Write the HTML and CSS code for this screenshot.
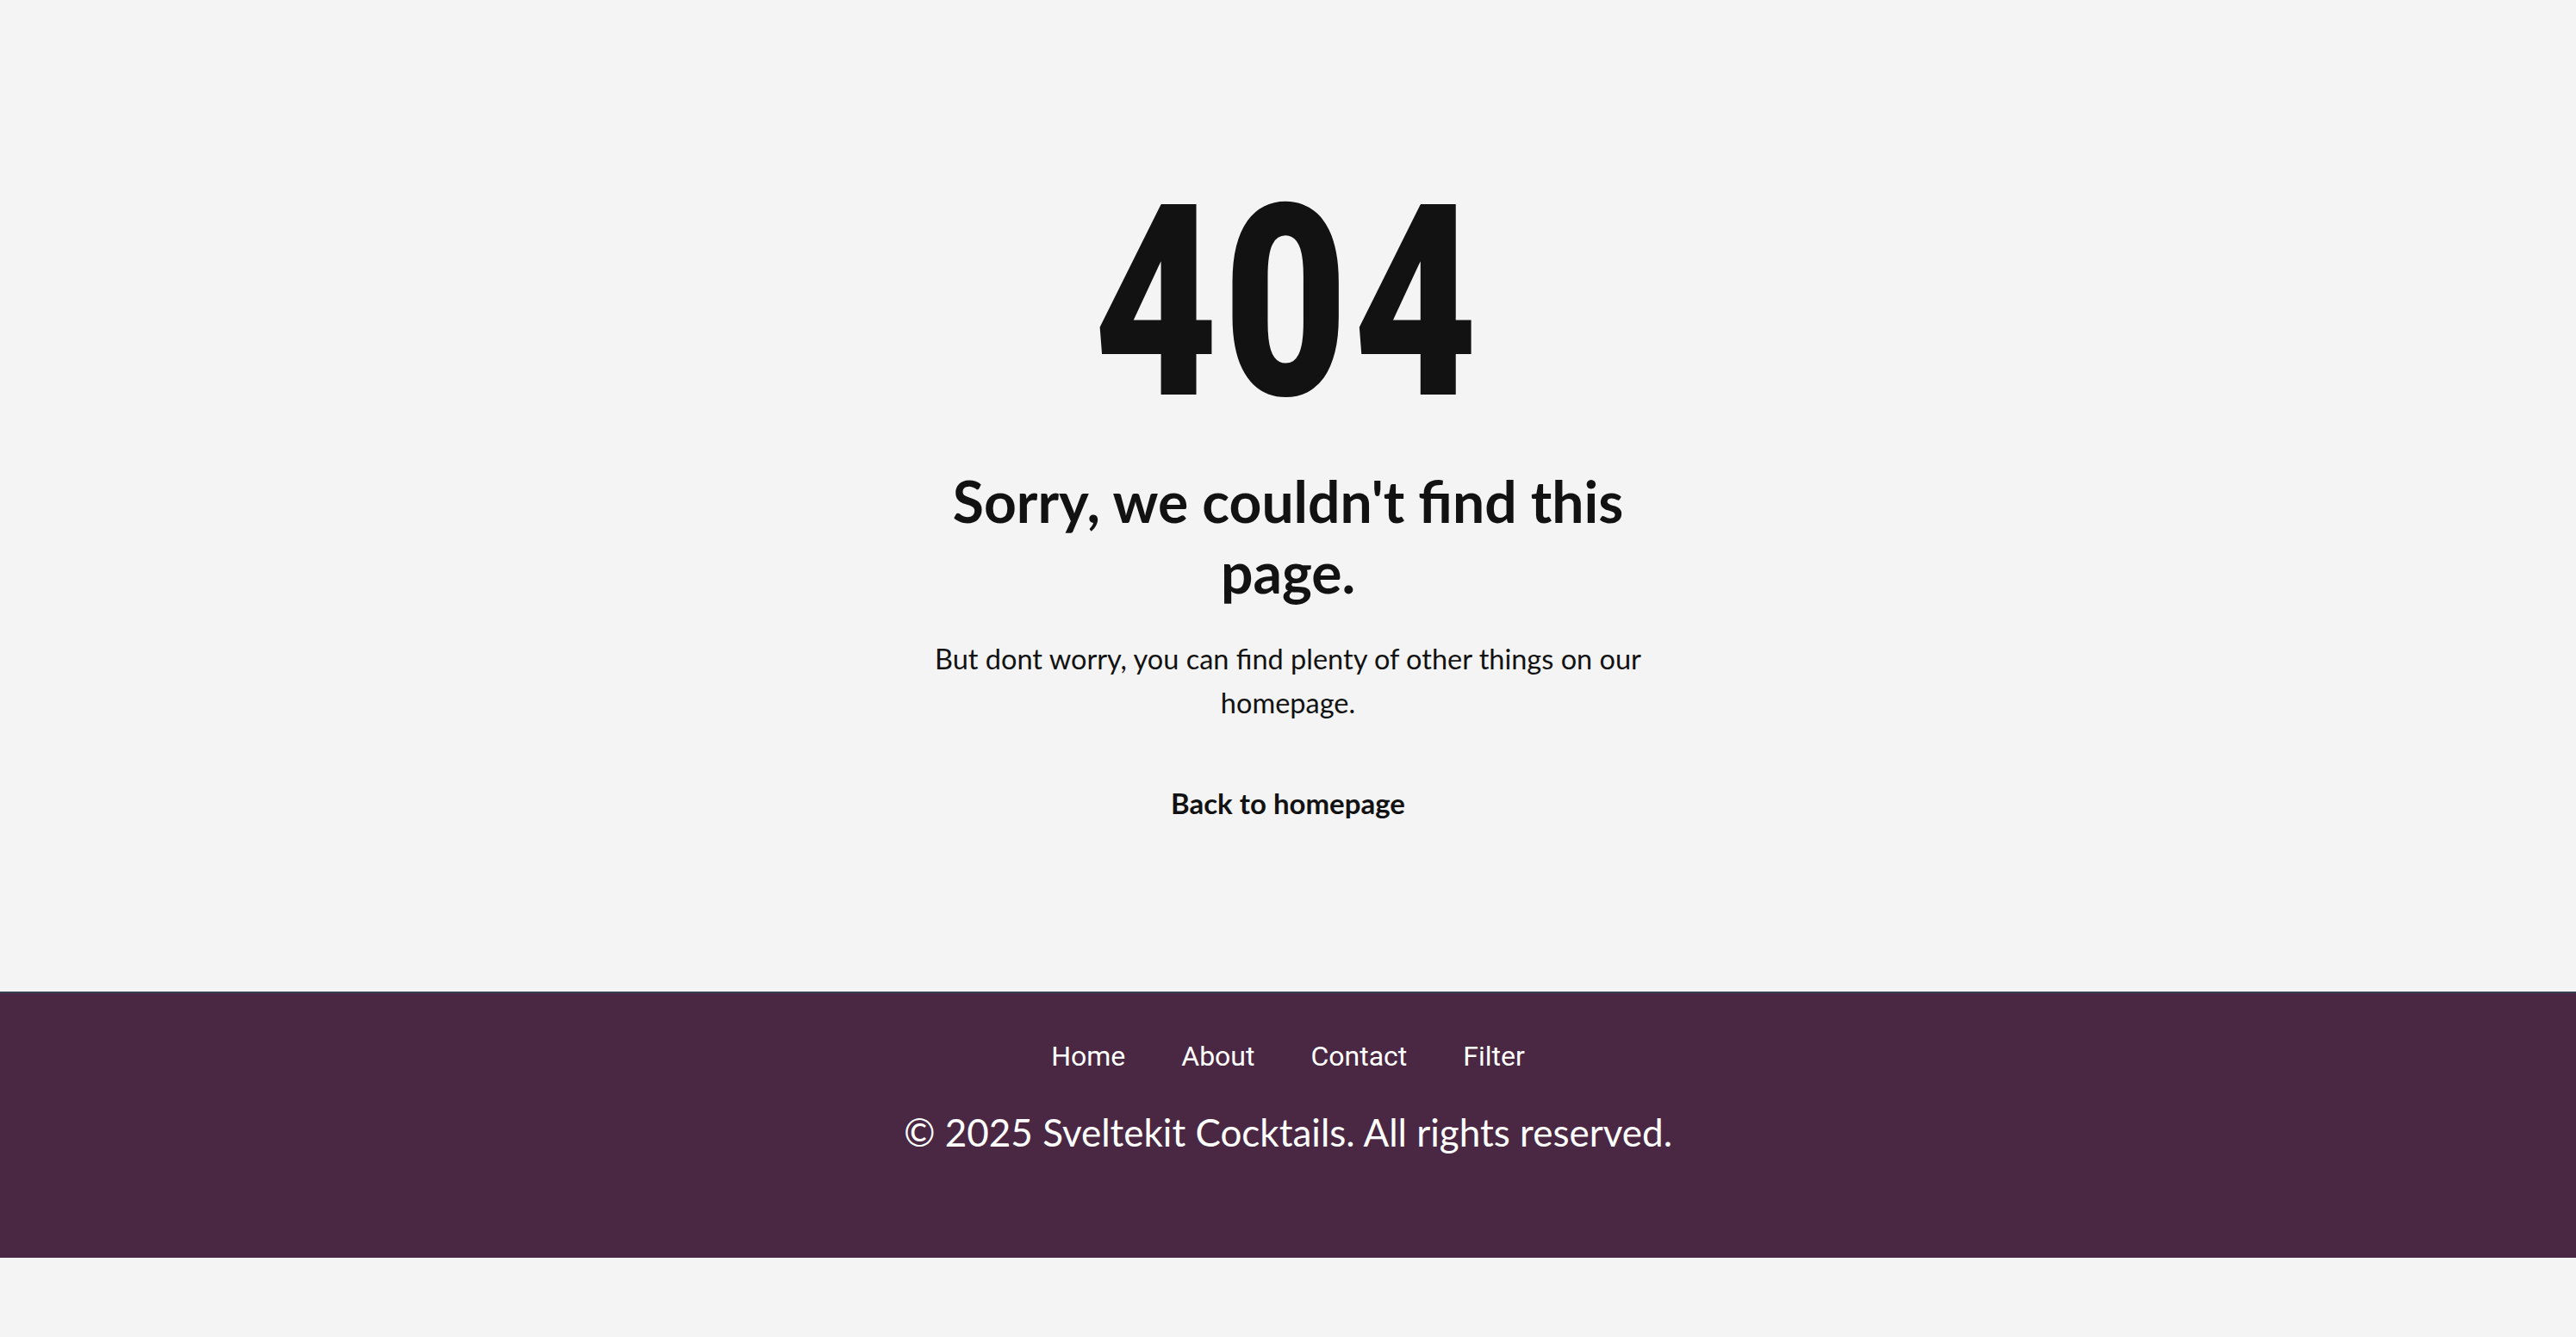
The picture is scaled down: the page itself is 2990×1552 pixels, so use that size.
FILE: index.html
```html
<!DOCTYPE html>
<html lang="en">
<head>
<meta charset="utf-8">
<title>404 - Sveltekit Cocktails</title>
<link rel="stylesheet" href="styles.css">
</head>
<body>
<div class="page">
  <main class="notfound">
    <h1 class="code"><span class="code-inner">404</span></h1>
    <h2 class="title">Sorry, we couldn't find this page.</h2>
    <p class="lead">But dont worry, you can find plenty of other things on our homepage.</p>
    <a class="back" href="#">Back to homepage</a>
  </main>
  <footer class="footer">
    <nav class="footer-nav">
      <a href="#">Home</a>
      <a href="#">About</a>
      <a href="#">Contact</a>
      <a href="#">Filter</a>
    </nav>
    <p class="copy">© 2025 Sveltekit Cocktails. All rights reserved.</p>
  </footer>
</div>
</body>
</html>
```

FILE: styles.css
```css
html, body {
  margin: 0;
  padding: 0;
  background: #f4f4f4;
}

body {
  font-family: "Lato", "Noto Sans", sans-serif;
  color: #121212;
}

.page {
  padding-bottom: 92px;
}

.notfound {
  display: flex;
  flex-direction: column;
  align-items: center;
  text-align: center;
  padding-top: 196px;
  height: 1151px;
  box-sizing: border-box;
}

.code {
  margin: 0;
  font-family: "Roboto", sans-serif;
  font-weight: 900;
  font-size: 311px;
  line-height: 311px;
  color: #121212;
}

.code-inner {
  display: inline-block;
  transform: scaleX(0.8);
  letter-spacing: 8px;
}

.title {
  margin: 34px 0 0;
  max-width: 820px;
  font-size: 66px;
  line-height: 82px;
  font-weight: 700;
}

.lead {
  margin: 34px 0 0;
  max-width: 860px;
  font-size: 32.5px;
  line-height: 51px;
  font-weight: 400;
}

.back {
  margin-top: 66px;
  font-size: 33px;
  line-height: 51px;
  font-weight: 700;
  color: #121212;
  text-decoration: none;
}

.footer {
  background: #4a2742;
  border-top: 2px solid #374151;
  padding: 49px 0 113px;
  display: flex;
  flex-direction: column;
  align-items: center;
  color: #ffffff;
}

.footer-nav {
  display: flex;
  gap: 65px;
  font-family: "Roboto", sans-serif;
  font-size: 32px;
  line-height: 48px;
}

.footer-nav a {
  color: #ffffff;
  text-decoration: none;
}

.copy {
  margin: 31px 0 0;
  font-size: 44px;
  line-height: 66px;
}
```
